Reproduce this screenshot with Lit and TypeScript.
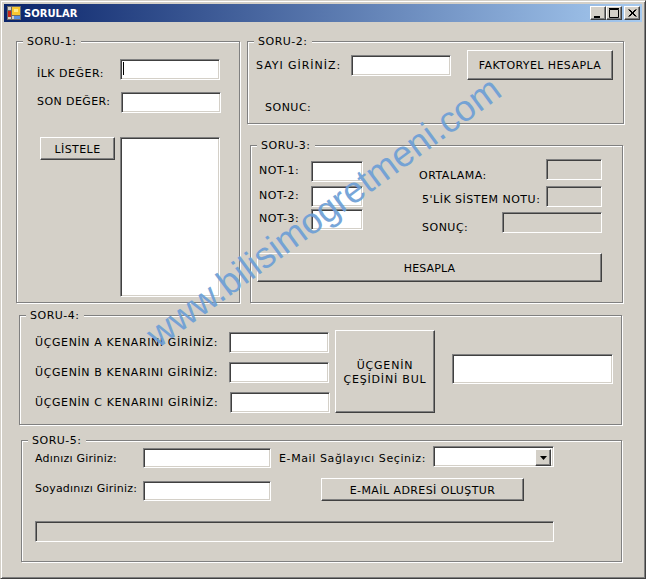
import { LitElement, html, css } from "lit";
import { customElement } from "lit/decorators.js";

@customElement("app-root")
export class AppRoot extends LitElement {
  static styles = css`
    :host { display: block; width: 646px; height: 579px; font-family: "DejaVu Sans", Verdana, sans-serif; font-size: 11px; color: #000; letter-spacing: .5px; }
    * { box-sizing: border-box; }
    .window { position: relative; width: 646px; height: 579px; background: #d4d0c8; overflow: hidden;
      border-style: solid; border-width: 1px; border-color: #d4d0c8 #404040 #404040 #d4d0c8;
      box-shadow: inset 1px 1px #fff, inset -1px -1px #808080; padding: 3px; }
    .title { display: flex; align-items: center; height: 18px; background: linear-gradient(90deg, #0a246a, #a6caf0); color: #fff; font-weight: bold; font-size: 10px; letter-spacing: 0; padding: 0 2px 0 3px; }
    .title svg.icon { width: 14px; height: 14px; margin-right: 3px; flex: none; }
    .title span { flex: 1; }
    .wbtn { width: 16px; height: 14px; display: flex; background: #d4d0c8; flex: none;
      border-style: solid; border-width: 1px; border-color: #fff #404040 #404040 #fff; box-shadow: inset -1px -1px #808080; }
    .wbtn svg { width: 14px; height: 12px; display: block; }
    .wbtn.close { margin-left: 2px; }

    .row1 { display: flex; margin: 19px 0 0 12px; align-items: flex-start; }
    .col2 { margin-left: 7px; }
    .flex { display: flex; align-items: flex-start; }
    .center { display: flex; align-items: center; }

    .group { position: relative; border: 1px solid #808080; box-shadow: inset 1px 1px #fff, 1px 1px #fff; }
    .legend { position: absolute; top: -7px; left: 6px; background: #d4d0c8; padding: 0 4px; line-height: 14px; white-space: nowrap; }
    .g1 { width: 224px; height: 262px; }
    .g2 { width: 377px; height: 83px; }
    .g3 { width: 373px; height: 158px; margin: 21px 0 0 3px; }
    .g4 { width: 603px; height: 110px; margin: 12px 0 0 15px; }
    .g5 { width: 601px; height: 122px; margin: 15px 0 0 17px; }

    .lbl { line-height: 14px; white-space: nowrap; flex: none; }
    .tb { display: block; flex: none; width: 100px; height: 21px; background: #fff; position: relative;
      border-style: solid; border-width: 1px; border-color: #808080 #fff #fff #808080;
      box-shadow: inset 1px 1px #404040, inset -1px -1px #d4d0c8; }
    .ro { background: #d4d0c8; }
    .btn { display: flex; align-items: center; justify-content: center; text-align: center; flex: none; background: #d4d0c8; line-height: 14px; padding-top: 2px;
      border-style: solid; border-width: 1px; border-color: #fff #404040 #404040 #fff; box-shadow: inset -1px -1px #808080; }
    .caret { position: absolute; left: 2px; top: 2px; width: 1px; height: 13px; background: #000; }

    .ls-15 { letter-spacing: .15px; }
    .ls-22 { letter-spacing: .22px; }
    .ls-42 { letter-spacing: .42px; }
    .ls-60 { letter-spacing: .61px; }
    .ls-82 { letter-spacing: .82px; }
    .ls-95 { letter-spacing: .95px; }

    /* soru 1 */
    .s1a { margin: 17px 0 0 20px; height: 21px; }
    .s1b { margin: 12px 0 0 20px; }
    .s1c { margin: 24px 0 0 23px; }
    .w83 { width: 83px; padding-top: 8px; }
    .w84 { width: 84px; margin-bottom: 2px; }
    .b-list { width: 75px; height: 23px; }
    .list { width: 100px; height: 160px; margin-left: 5px; }

    /* soru 2 */
    .s2a { margin: 8px 0 0 8px; height: 30px; }
    .w95 { width: 95px; padding-top: 2px; }
    .b-fact { width: 146px; height: 30px; margin-left: 16px; }
    .s2b { margin: 21px 0 0 17px; }

    /* soru 3 */
    .s3l { margin: 15px 0 0 8px; width: 104px; }
    .s3r { margin: 13px 0 0 56px; width: 183px; }
    .nrow { display: flex; align-items: center; height: 21px; }
    .nrow .lbl { width: 52px; margin-bottom: 1px; }
    .n2 { margin-top: 4px; }
    .n3 { margin-top: 2px; }
    .w52 { width: 52px; }
    .rrow { display: flex; justify-content: space-between; align-items: center; height: 21px; }
    .r2 { margin-top: 6px; }
    .r3 { margin-top: 5px; }
    .w56 { width: 56px; }
    .l-a { padding-top: 13px; }
    .l-b { padding: 7px 0 0 3px; }
    .l-c { padding: 11px 0 0 3px; }
    .b-hes { width: 345px; height: 29px; margin: 20px 0 0 6px; }

    /* soru 4 */
    .s4l { margin: 16px 0 0 15px; width: 295px; }
    .trow { display: flex; align-items: center; margin-bottom: 9px; }
    .w194 { width: 194px; }
    .w195 { width: 195px; }
    .b-tri { width: 100px; height: 83px; margin: 14px 0 0 5px; }
    .big { width: 161px; height: 30px; margin: 38px 0 0 17px; }

    /* soru 5 */
    .s5a { margin: 5px 0 0 13px; height: 21px; display: flex; align-items: center; }
    .s5a .lbl { padding-top: 4px; }
    .w108 { width: 108px; }
    .w128 { width: 128px; height: 20px; margin-top: 3px; }
    .email { width: 154px; margin-left: 8px; }
    .combo { width: 121px; height: 21px; display: flex; justify-content: flex-end; padding: 1px; }
    .arrow { width: 16px; height: 17px; margin: 1px 1px 0 0; display: flex; align-items: center; justify-content: center; background: #d4d0c8; flex: none;
      border-style: solid; border-width: 1px; border-color: #fff #404040 #404040 #fff; box-shadow: inset -1px -1px #808080; }
    .arrow svg { width: 7px; height: 4px; display: block; }
    .s5b { margin: 11px 0 0 13px; height: 23px; display: flex; align-items: center; }
    .s5b .lbl { margin-bottom: 1px; }
    .b-mail { width: 203px; height: 23px; margin-left: 50px; }
    .bar { width: 519px; height: 21px; margin: 20px 0 0 13px; }

    .wm { position: absolute; left: 150px; top: 338px; height: 0; line-height: 0; white-space: nowrap;
      font-family: "Liberation Sans", Arial, sans-serif; font-size: 36.4px; letter-spacing: 0; color: #6d9fd6; opacity: .92;
      transform-origin: 0 0; transform: rotate(-36.3deg); pointer-events: none; }
  `;

  render() {
    return html`
      <div class="window">
        <div class="title">
          <svg class="icon" viewBox="0 0 14 14">
            <rect x="0.5" y="0.5" width="13" height="13" fill="#d4d0c8" stroke="#6b6b6b"/>
            <path d="M0 4.5h5M4.5 0v14M0 9.5h14" stroke="#6b6b6b" fill="none"/>
            <rect x="5" y="1" width="8" height="8" fill="#f8c830"/>
            <rect x="7" y="3" width="4" height="3" fill="#fce88a"/>
            <rect x="1" y="5" width="3" height="6" fill="#c82818"/>
            <rect x="7" y="10" width="6" height="3" fill="#5890e0"/>
          </svg>
          <span>SORULAR</span>
          <div class="wbtn"><svg viewBox="0 0 14 12"><rect x="3" y="9" width="6" height="2" fill="#000"/></svg></div>
          <div class="wbtn"><svg viewBox="0 0 14 12"><path d="M2.5 2.5h9v8h-9z M2 1.5h10" fill="none" stroke="#000"/></svg></div>
          <div class="wbtn close"><svg viewBox="0 0 14 12"><path d="M3.5 2.5l7 7M4.5 2.5l7 7M10.5 2.5l-7 7M11.5 2.5l-7 7" fill="none" stroke="#000" stroke-width="1"/></svg></div>
        </div>

        <div class="row1">
          <div class="group g1">
            <div class="legend">SORU-1:</div>
            <div class="flex s1a"><div class="lbl w83">İLK DEĞER:</div><div class="tb"><div class="caret"></div></div></div>
            <div class="center s1b"><div class="lbl w84 ls-42">SON DEĞER:</div><div class="tb"></div></div>
            <div class="flex s1c"><div class="btn b-list ls-42">LİSTELE</div><div class="tb list"></div></div>
          </div>
          <div class="col2">
            <div class="group g2">
              <div class="legend">SORU-2:</div>
              <div class="center s2a"><div class="lbl w95 ls-95">SAYI GİRİNİZ:</div><div class="tb"></div><div class="btn b-fact ls-42">FAKTORYEL HESAPLA</div></div>
              <div class="lbl s2b">SONUC:</div>
            </div>
            <div class="group g3">
              <div class="legend">SORU-3:</div>
              <div class="flex">
                <div class="s3l">
                  <div class="nrow"><div class="lbl">NOT-1:</div><div class="tb w52"></div></div>
                  <div class="nrow n2"><div class="lbl">NOT-2:</div><div class="tb w52"></div></div>
                  <div class="nrow n3"><div class="lbl">NOT-3:</div><div class="tb w52"></div></div>
                </div>
                <div class="s3r">
                  <div class="rrow"><div class="lbl l-a">ORTALAMA:</div><div class="tb ro w56"></div></div>
                  <div class="rrow r2"><div class="lbl l-b">5'LİK SİSTEM NOTU:</div><div class="tb ro w56"></div></div>
                  <div class="rrow r3"><div class="lbl l-c">SONUÇ:</div><div class="tb ro"></div></div>
                </div>
              </div>
              <div class="btn b-hes ls-15">HESAPLA</div>
            </div>
          </div>
        </div>

        <div class="group g4">
          <div class="legend">SORU-4:</div>
          <div class="flex">
            <div class="s4l">
              <div class="trow"><div class="lbl w194 ls-60">ÜÇGENİN A KENARINI GİRİNİZ:</div><div class="tb"></div></div>
              <div class="trow"><div class="lbl w194 ls-60">ÜÇGENİN B KENARINI GİRİNİZ:</div><div class="tb"></div></div>
              <div class="trow"><div class="lbl w195 ls-60">ÜÇGENİN C KENARINI GİRİNİZ:</div><div class="tb"></div></div>
            </div>
            <div class="btn b-tri ls-82">ÜÇGENİN<br />ÇEŞİDİNİ BUL</div>
            <div class="tb big"></div>
          </div>
        </div>

        <div class="group g5">
          <div class="legend">SORU-5:</div>
          <div class="s5a">
            <div class="lbl w108 ls-22">Adınızı Giriniz:</div><div class="tb w128"></div>
            <div class="lbl email ls-60">E-Mail Sağlayıcı Seçiniz:</div>
            <div class="tb combo"><div class="arrow"><svg viewBox="0 0 7 4"><path d="M0 0h7L3.5 4z" fill="#000"/></svg></div></div>
          </div>
          <div class="s5b">
            <div class="lbl w108 ls-22">Soyadınızı Giriniz:</div><div class="tb w128"></div>
            <div class="btn b-mail ls-42">E-MAİL ADRESİ OLUŞTUR</div>
          </div>
          <div class="tb ro bar"></div>
        </div>

        <div class="wm">www.bilisimogretmeni.com</div>
      </div>
    `;
  }
}
